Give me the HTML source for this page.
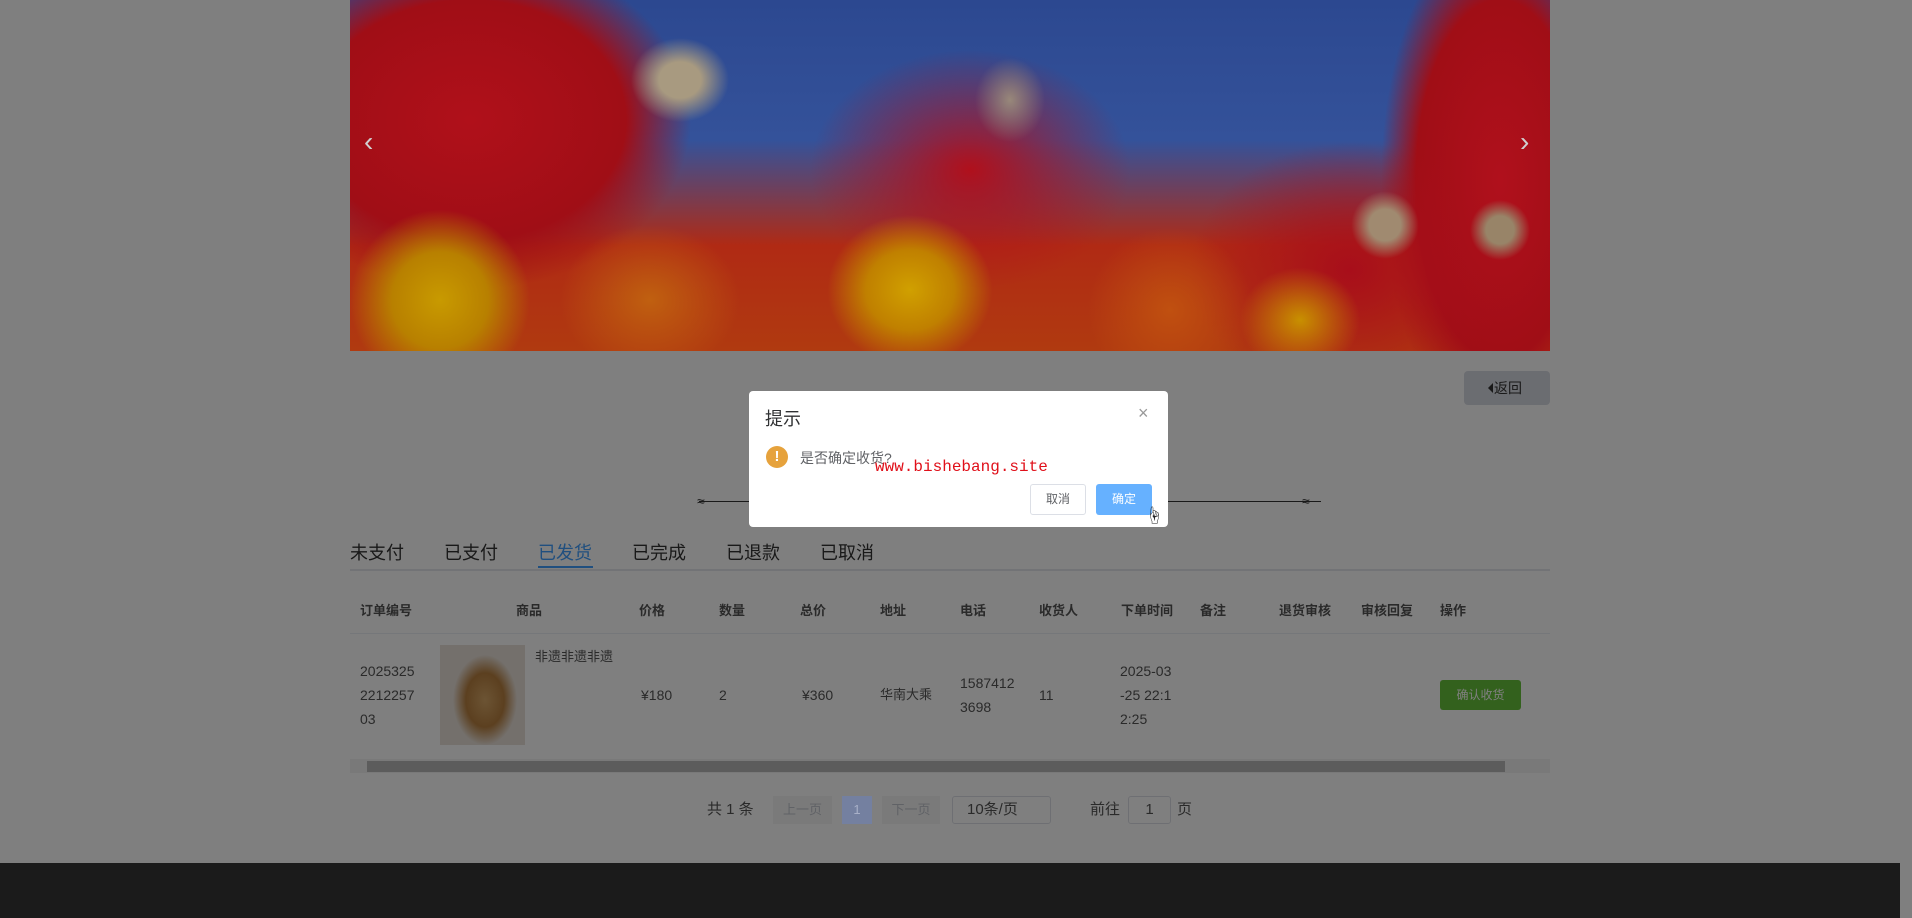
<!DOCTYPE html>
<html><head><meta charset="utf-8"><style>
*{margin:0;padding:0;box-sizing:border-box}
body{width:1912px;height:918px;overflow:hidden;background:#fff;font-family:"Liberation Sans","Noto Sans CJK SC",sans-serif;position:relative;color:#333}
.abs{position:absolute}
.banner{left:350px;top:0;width:1200px;height:351px;overflow:hidden;z-index:5;
background:
radial-gradient(ellipse 70px 60px at 330px 80px,#a89a80 0,#a89a80 30%,transparent 70%),
radial-gradient(ellipse 45px 45px at 1035px 225px,#a08a70 0,#a08a70 35%,transparent 75%),
radial-gradient(ellipse 40px 40px at 1150px 230px,#988468 0,#988468 35%,transparent 75%),
radial-gradient(ellipse 50px 60px at 660px 100px,#98887a 0,transparent 70%),
radial-gradient(ellipse 120px 120px at 90px 300px,#c89a00 0,#b88000 40%,transparent 75%),
radial-gradient(ellipse 110px 100px at 560px 290px,#d0a000 0,#c08000 40%,transparent 75%),
radial-gradient(ellipse 120px 100px at 300px 300px,#c06010 0,transparent 75%),
radial-gradient(ellipse 110px 110px at 820px 310px,#c05010 0,transparent 75%),
radial-gradient(ellipse 80px 70px at 950px 320px,#c89000 0,transparent 75%),
radial-gradient(ellipse 260px 200px at 120px 120px,#b0101a 0,#a00e16 60%,transparent 85%),
radial-gradient(ellipse 200px 150px at 620px 170px,#b0101c 0,transparent 80%),
radial-gradient(ellipse 200px 160px at 1000px 270px,#a80e1a 0,transparent 80%),
radial-gradient(ellipse 140px 300px at 1150px 180px,#b0101c 0,#a00e16 60%,transparent 85%),
linear-gradient(180deg,#2c4890 0,#34529a 40%,#b02a14 70%,#b03a10 100%);}
.banner .ar{position:absolute;top:126px;color:#d0d0d0;font-size:28px;font-weight:300}
.mask{left:0;top:0;width:1912px;height:918px;background:rgba(0,0,0,.5);z-index:4}
.back{left:1464px;top:371px;width:86px;height:34px;background:#d7dae2;border-radius:4px;font-size:14px;color:#333;line-height:34px;padding-left:22px}
.back:before{content:"";position:absolute;left:24px;top:12px;border:5px solid transparent;border-right:5px solid #333;border-left:0}
.back span{margin-left:8px}
.orn{left:699px;top:501px;width:622px;height:1px;background:#333}
.tab{top:539px;font-size:18px;color:#333}
.th{top:600px;font-size:13px;font-weight:bold;color:#555}
.td{font-size:14px;color:#555;line-height:24px}
.modal{left:749px;top:391px;width:419px;height:136px;background:#fff;border-radius:4px;z-index:10}
.page{font-size:15px;color:#555}
</style></head><body>
<div class="abs banner"><span class="ar" style="left:14px">‹</span><span class="ar" style="left:1170px">›</span></div>

<div class="abs back"><span>返回</span></div>
<div class="abs orn"></div>
<div class="abs" style="left:697px;top:493px;font-size:14px;color:#333">≈</div>
<div class="abs" style="left:1302px;top:493px;font-size:14px;color:#333">≈</div>

<div class="abs tab" style="left:350px">未支付</div>
<div class="abs tab" style="left:444px">已支付</div>
<div class="abs tab" style="left:538px;color:#409eff">已发货</div>
<div class="abs" style="left:538px;top:566px;width:55px;height:2px;background:#409eff"></div>
<div class="abs tab" style="left:632px">已完成</div>
<div class="abs tab" style="left:726px">已退款</div>
<div class="abs tab" style="left:820px">已取消</div>
<div class="abs" style="left:350px;top:569px;width:1200px;height:2px;background:#e4e7ed"></div>

<div class="abs th" style="left:360px">订单编号</div>
<div class="abs th" style="left:516px">商品</div>
<div class="abs th" style="left:639px">价格</div>
<div class="abs th" style="left:719px">数量</div>
<div class="abs th" style="left:800px">总价</div>
<div class="abs th" style="left:880px">地址</div>
<div class="abs th" style="left:960px">电话</div>
<div class="abs th" style="left:1039px">收货人</div>
<div class="abs th" style="left:1121px">下单时间</div>
<div class="abs th" style="left:1200px">备注</div>
<div class="abs th" style="left:1279px">退货审核</div>
<div class="abs th" style="left:1361px">审核回复</div>
<div class="abs th" style="left:1440px">操作</div>
<div class="abs" style="left:350px;top:633px;width:1200px;height:1px;background:#ebeef5"></div>

<div class="abs td" style="left:360px;top:659px">2025325<br>2212257<br>03</div>
<div class="abs" style="left:440px;top:645px;width:85px;height:100px;background:radial-gradient(ellipse 32px 45px at 45px 55px,#d8a868,#b88040 60%,#e8e0d8 100%)"></div>
<div class="abs td" style="left:535px;top:645px;font-size:13px">非遗非遗非遗</div>
<div class="abs td" style="left:641px;top:683px">¥180</div>
<div class="abs td" style="left:719px;top:683px">2</div>
<div class="abs td" style="left:802px;top:683px">¥360</div>
<div class="abs td" style="left:880px;top:683px;font-size:13px">华南大乘</div>
<div class="abs td" style="left:960px;top:671px">1587412<br>3698</div>
<div class="abs td" style="left:1039px;top:683px">11</div>
<div class="abs td" style="left:1120px;top:659px">2025-03<br>-25 22:1<br>2:25</div>
<div class="abs" style="left:1440px;top:680px;width:81px;height:30px;background:#67c23a;border-radius:3px;color:#fff;font-size:12px;text-align:center;line-height:30px">确认收货</div>

<div class="abs" style="left:350px;top:759px;width:1200px;height:14px;background:#f2f2f2"></div>
<div class="abs" style="left:367px;top:761px;width:1138px;height:11px;background:#b8b8b8"></div>

<div class="abs page" style="left:707px;top:798px">共 1 条</div>
<div class="abs" style="left:773px;top:796px;width:59px;height:28px;background:#f4f4f5;color:#c0c4cc;font-size:13px;text-align:center;line-height:28px">上一页</div>
<div class="abs" style="left:842px;top:796px;width:30px;height:28px;background:#7480a0;color:#a8b0c8;font-size:13px;text-align:center;line-height:28px;z-index:6">1</div>
<div class="abs" style="left:882px;top:796px;width:58px;height:28px;background:#f4f4f5;color:#c0c4cc;font-size:13px;text-align:center;line-height:28px">下一页</div>
<div class="abs" style="left:952px;top:796px;width:99px;height:28px;border:1px solid #dcdfe6;border-radius:3px;font-size:15px;color:#555;line-height:26px;padding-left:14px">10条/页</div>
<div class="abs page" style="left:1090px;top:798px">前往</div>
<div class="abs" style="left:1128px;top:796px;width:43px;height:28px;border:1px solid #dcdfe6;border-radius:3px;font-size:15px;text-align:center;line-height:26px;color:#555">1</div>
<div class="abs page" style="left:1177px;top:798px">页</div>

<div class="abs" style="left:0;top:863px;width:1900px;height:55px;background:#363636"></div>

<div class="abs mask"></div>

<div class="abs modal">
 <div class="abs" style="left:16px;top:14px;font-size:18px;color:#303133">提示</div>
 <div class="abs" style="left:389px;top:12px;font-size:18px;color:#999">×</div>
 <div class="abs" style="left:17px;top:55px;width:22px;height:22px;border-radius:50%;background:#e6a23c;color:#fff;font-weight:bold;font-size:15px;text-align:center;line-height:22px">!</div>
 <div class="abs" style="left:51px;top:57px;font-size:14px;color:#606266">是否确定收货?</div>
 <div class="abs" style="left:126px;top:67px;font-size:16px;color:#e0101a;font-family:'Liberation Mono',monospace">www.bishebang.site</div>
 <div class="abs" style="left:281px;top:93px;width:56px;height:31px;border:1px solid #dcdfe6;border-radius:3px;font-size:12px;color:#606266;text-align:center;line-height:29px">取消</div>
 <div class="abs" style="left:347px;top:93px;width:56px;height:31px;background:#66b1ff;border-radius:3px;font-size:12px;color:#fff;text-align:center;line-height:31px">确定</div>
 <div class="abs" style="left:396px;top:111px;font-size:18px;color:#222">☝</div>
</div>
</body></html>
